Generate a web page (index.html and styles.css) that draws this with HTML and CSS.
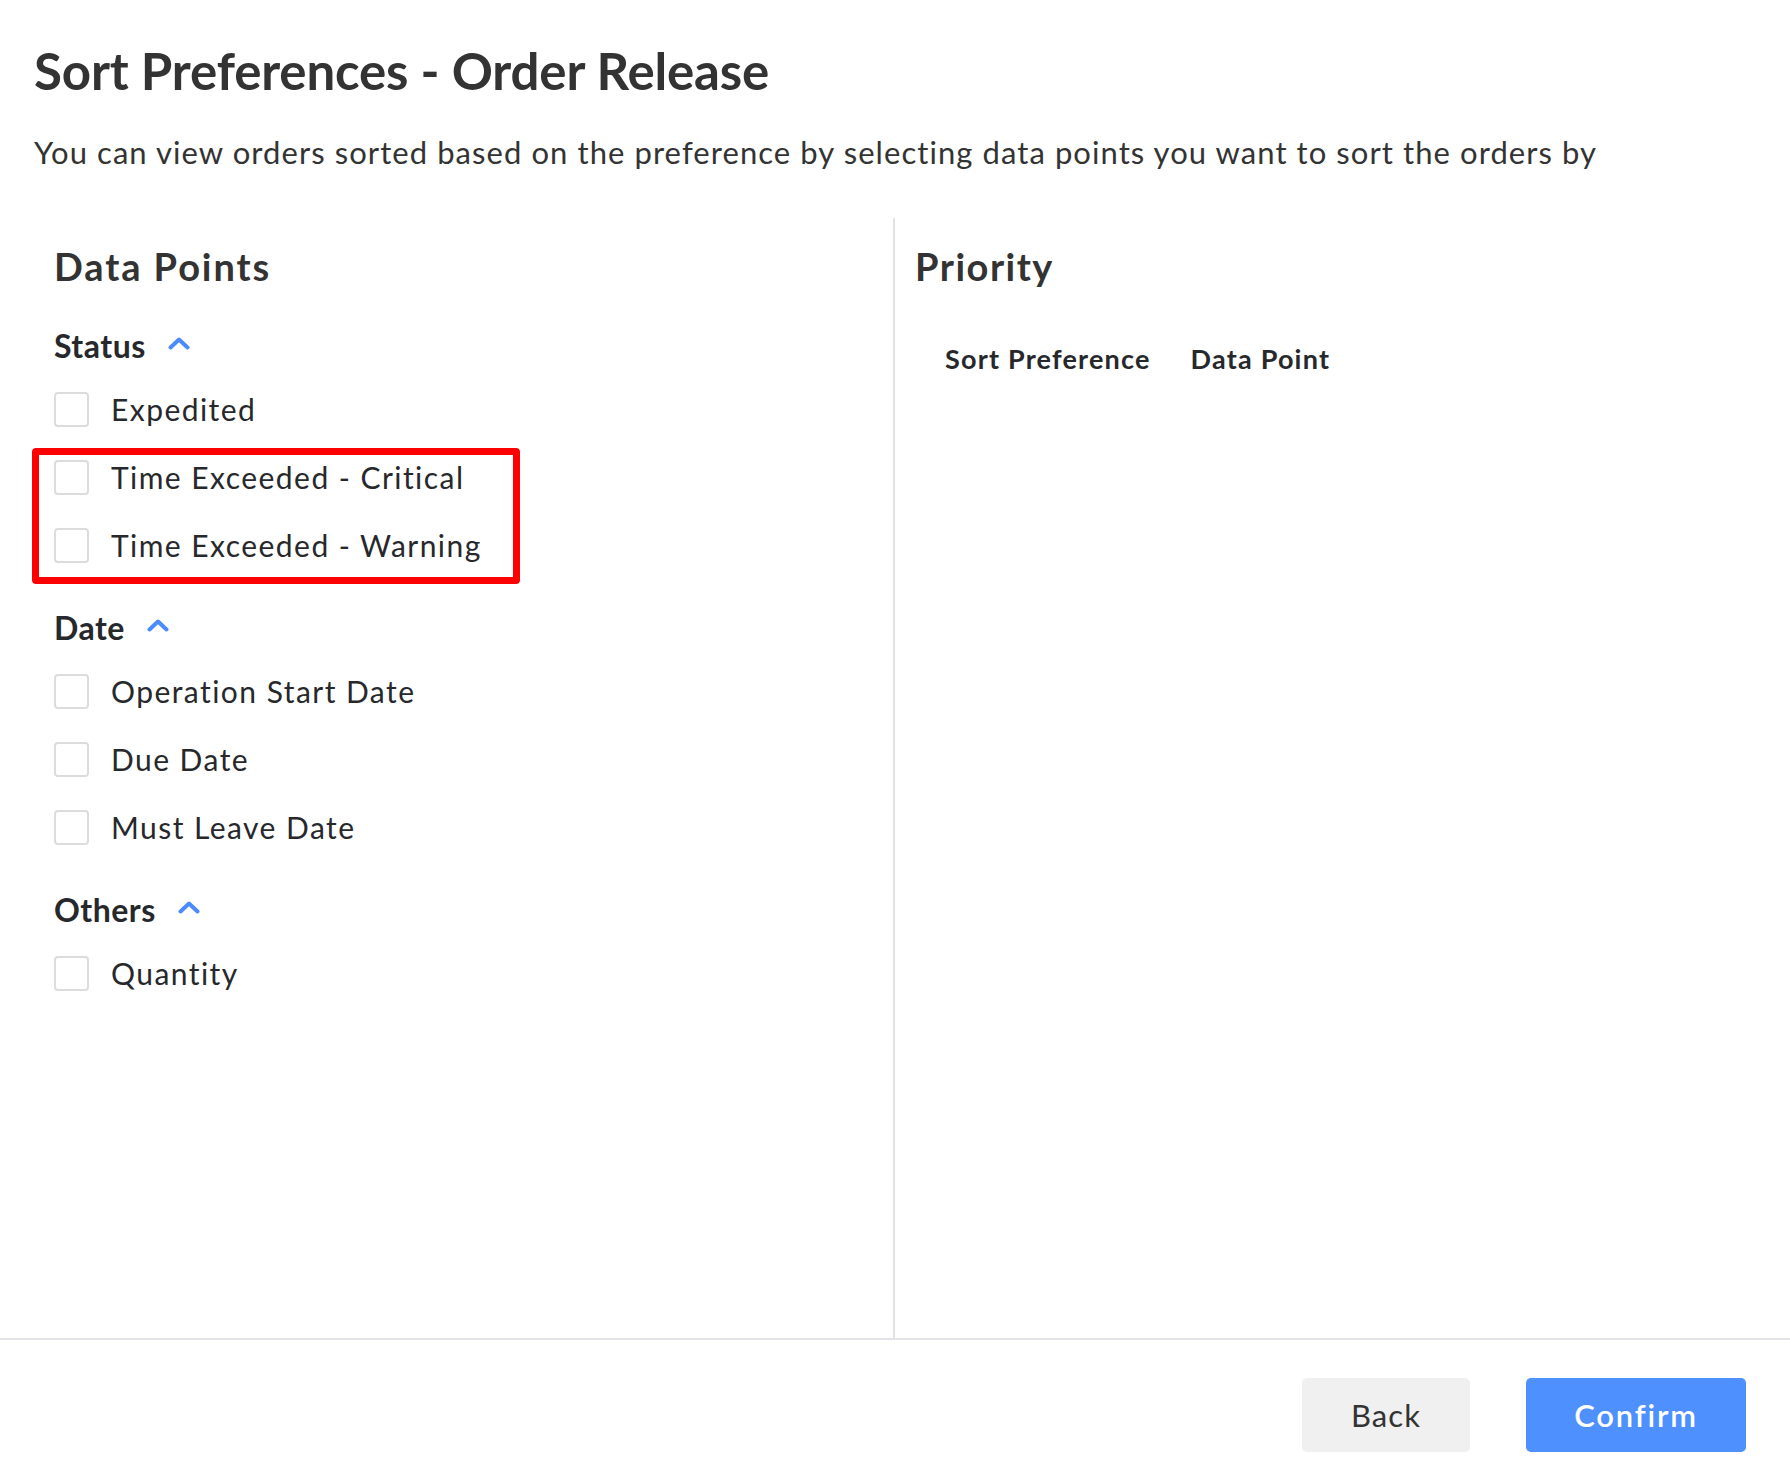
FILE: index.html
```html
<!DOCTYPE html>
<html lang="en">
<head>
<meta charset="utf-8">
<title>Sort Preferences - Order Release</title>
<link rel="stylesheet" href="styles.css">
</head>
<body>
<div class="page">
  <header class="head">
    <h1 class="title">Sort Preferences - Order Release</h1>
    <p class="subtitle">You can view orders sorted based on the preference by selecting data points you want to sort the orders by</p>
  </header>

  <main class="columns">
    <section class="col col-left">
      <h2 class="col-title">Data Points</h2>

      <div class="group">
        <div class="group-head">
          <span>Status</span>
          <svg class="chev" width="22" height="13" viewBox="0 0 22 13"><polyline points="2.5,10.5 11,2.5 19.5,10.5" fill="none" stroke="#4a8cff" stroke-width="4" stroke-linecap="round" stroke-linejoin="round"/></svg>
        </div>
        <ul class="items">
          <li class="item"><span class="box"></span><span class="label">Expedited</span></li>
          <li class="hl-wrap">
            <ul class="items">
              <li class="item"><span class="box"></span><span class="label">Time Exceeded - Critical</span></li>
              <li class="item"><span class="box"></span><span class="label">Time Exceeded - Warning</span></li>
            </ul>
            <span class="highlight"></span>
          </li>
        </ul>
      </div>

      <div class="group">
        <div class="group-head">
          <span>Date</span>
          <svg class="chev" width="22" height="13" viewBox="0 0 22 13"><polyline points="2.5,10.5 11,2.5 19.5,10.5" fill="none" stroke="#4a8cff" stroke-width="4" stroke-linecap="round" stroke-linejoin="round"/></svg>
        </div>
        <ul class="items">
          <li class="item"><span class="box"></span><span class="label">Operation Start Date</span></li>
          <li class="item"><span class="box"></span><span class="label">Due Date</span></li>
          <li class="item"><span class="box"></span><span class="label">Must Leave Date</span></li>
        </ul>
      </div>

      <div class="group">
        <div class="group-head">
          <span>Others</span>
          <svg class="chev" width="22" height="13" viewBox="0 0 22 13"><polyline points="2.5,10.5 11,2.5 19.5,10.5" fill="none" stroke="#4a8cff" stroke-width="4" stroke-linecap="round" stroke-linejoin="round"/></svg>
        </div>
        <ul class="items">
          <li class="item"><span class="box"></span><span class="label">Quantity</span></li>
        </ul>
      </div>
    </section>

    <section class="col col-right">
      <h2 class="col-title">Priority</h2>
      <div class="table-head">
        <span class="th th-sort">Sort Preference</span>
        <span class="th">Data Point</span>
      </div>
    </section>
  </main>

  <footer class="foot">
    <button class="btn btn-back" type="button">Back</button>
    <button class="btn btn-confirm" type="button">Confirm</button>
  </footer>
</div>
</body>
</html>
```

FILE: styles.css
```css
* { box-sizing: border-box; }

html, body {
  margin: 0;
  padding: 0;
  background: #ffffff;
}

body {
  font-family: "Lato", "Noto Sans", sans-serif;
  color: #333333;
  line-height: 1.2;
}

.page {
  width: 1790px;
  height: 1484px;
  display: flex;
  flex-direction: column;
}

.head {
  padding: 40px 0 0 34px;
}

.title {
  margin: 0;
  font-size: 51px;
  font-weight: 700;
  letter-spacing: -0.15px;
  color: #333333;
  line-height: 1.2;
}

.subtitle {
  margin: 33px 0 0 0;
  font-size: 31px;
  font-weight: 400;
  letter-spacing: 1.07px;
  color: #333333;
  line-height: 1.2;
}

.columns {
  margin-top: 47px;
  height: 1120px;
  display: flex;
}

.col-left {
  width: 895px;
  border-right: 2px solid #e2e2e8;
  padding: 26px 0 0 54px;
}

.col-right {
  flex: 1;
  padding: 26px 0 0 20px;
}

.col-title {
  margin: 0;
  font-size: 38px;
  font-weight: 700;
  letter-spacing: 1.9px;
  color: #333333;
  line-height: 1.2;
}

.col-right .col-title {
  letter-spacing: 1.5px;
}

.group {
  margin-top: 46px;
}

.col-title + .group {
  margin-top: 37px;
}

.group-head {
  display: flex;
  align-items: center;
  gap: 22px;
  font-size: 32px;
  font-weight: 700;
  letter-spacing: 0.5px;
  color: #26282c;
  line-height: 1.2;
  height: 38px;
}

.chev {
  display: block;
  margin-top: -4px;
}

.items {
  list-style: none;
  margin: 27px 0 0 0;
  padding: 0;
  display: flex;
  flex-direction: column;
  gap: 33px;
}

.hl-wrap .items {
  margin: 0;
}

.hl-wrap {
  position: relative;
}

.highlight {
  position: absolute;
  left: -22px;
  top: -12px;
  width: 488px;
  height: 136px;
  border: 7px solid #ff0000;
  border-radius: 4px;
  pointer-events: none;
}

.item {
  display: flex;
  align-items: center;
  height: 35px;
}

.box {
  width: 35px;
  height: 35px;
  border: 2px solid #dcdcdc;
  border-radius: 4px;
  background: #ffffff;
  flex: none;
}

.label {
  margin-left: 22px;
  font-size: 30px;
  font-weight: 400;
  letter-spacing: 1.45px;
  color: #26282c;
  line-height: 1;
}

.table-head {
  margin-top: 53px;
  padding-left: 30px;
  display: flex;
  gap: 40px;
}

.th {
  font-size: 27px;
  font-weight: 700;
  letter-spacing: 1.2px;
  color: #26282c;
  line-height: 1.2;
}

.foot {
  flex: 1;
  border-top: 2px solid #e2e2e8;
  display: flex;
  justify-content: flex-end;
  align-items: flex-start;
  padding: 38px 44px 0 0;
  gap: 56px;
}

.btn {
  height: 74px;
  border: none;
  border-radius: 5px;
  font-family: "Lato", "Noto Sans", sans-serif;
  font-size: 31px;
  cursor: pointer;
}

.btn-back {
  width: 168px;
  background: #f0f0f0;
  color: #333333;
  font-weight: 400;
  letter-spacing: 1.1px;
}

.btn-confirm {
  width: 220px;
  background: #4d90fe;
  color: #ffffff;
  font-weight: 600;
  letter-spacing: 1.8px;
}
```
